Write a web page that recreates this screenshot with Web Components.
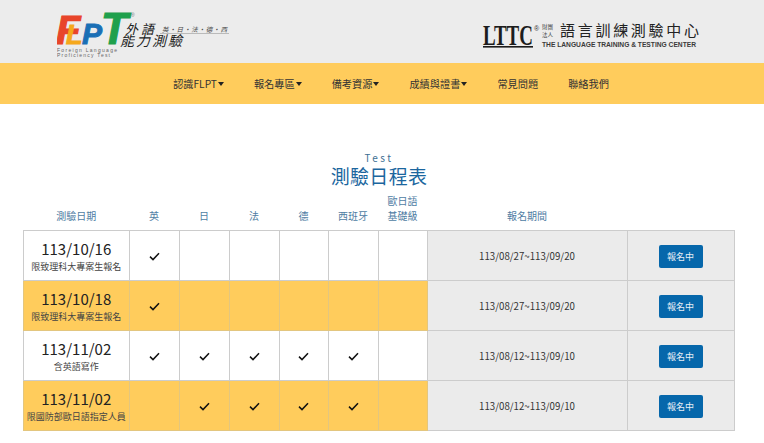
<!DOCTYPE html>
<html lang="zh-Hant">
<head>
<meta charset="utf-8">
<title>測驗日程表</title>
<style>
  html, body { margin: 0; padding: 0; background: #fff; }
  body { font-family: "Noto Sans CJK TC", "Noto Sans", sans-serif; overflow: hidden; }
</style>
</head>
<body>
<site-header></site-header>
<site-nav></site-nav>
<schedule-section heading="測驗日程表" eyebrow="Test"></schedule-section>

<script>
class SiteHeader extends HTMLElement {
  constructor() {
    super();
    this.attachShadow({ mode: "open" });
  }
  connectedCallback() {
    this.shadowRoot.innerHTML = `
      <style>
        :host { display: flex; justify-content: space-between; align-items: flex-start; height: 63px; background: #ececec; padding: 0 54px 0 57px; box-sizing: border-box; }
        svg { display: block; }
        .cjk { font-family: "Noto Sans CJK TC", sans-serif; }
        .lat { font-family: "Liberation Sans", sans-serif; }
      </style>
      <svg width="175" height="63" viewBox="0 0 175 63">
        <g class="lat" font-weight="700" font-style="italic">
          <text x="-1" y="44" fill="#e8452a" stroke="#e8452a" stroke-width="1.2" font-size="40">F</text>
          <text x="9" y="44" fill="#f5a81c" stroke="#f5a81c" stroke-width="1" font-size="27">L</text>
          <text x="25" y="44" fill="#1a6fb5" stroke="#1a6fb5" stroke-width="1" font-size="30">P</text>
          <text x="44" y="44" fill="#1fa04c" stroke="#1fa04c" stroke-width="1.2" font-size="44">T</text>
        </g>
        <text class="lat" x="74" y="17" font-size="5" fill="#777">®</text>
        <text class="cjk" x="68" y="34" font-size="13" font-style="italic" fill="#222" letter-spacing="3">外語</text>
        <text class="cjk" x="105" y="32" font-size="6.5" font-style="italic" fill="#444" letter-spacing=".8">英‧日‧法‧德‧西</text>
        <line x1="103" y1="33.5" x2="172" y2="33.5" stroke="#999" stroke-width=".6"/>
        <text class="cjk" x="63" y="46" font-size="14" font-style="italic" fill="#222" letter-spacing="2">能力測驗</text>
        <text class="lat" x="0" y="52" font-size="5" fill="#666" textLength="60" lengthAdjust="spacing">Foreign Language</text>
        <text class="lat" x="0" y="57" font-size="5" fill="#666" textLength="53" lengthAdjust="spacing">Proficiency Test</text>
      </svg>
      <svg width="228" height="63" viewBox="0 0 228 63">
        <text x="1" y="45" font-family="Liberation Serif" font-size="30" font-weight="700" fill="#1c1c1c" textLength="50" lengthAdjust="spacingAndGlyphs">LTTC</text>
        <rect x="1" y="46" width="50" height="1.6" fill="#1c1c1c"/>
        <text class="lat" x="52" y="31" font-size="7" fill="#333">®</text>
        <text x="60" y="29" class="cjk" font-size="5.5" fill="#444">財團</text>
        <text x="60" y="37" class="cjk" font-size="5.5" fill="#444">法人</text>
        <text x="78" y="36" class="cjk" font-size="15" fill="#222" textLength="139" lengthAdjust="spacing">語言訓練測驗中心</text>
        <text x="60" y="46.5" class="lat" font-size="6.7" font-weight="700" fill="#3a3a3a" textLength="154" lengthAdjust="spacing">THE LANGUAGE TRAINING &amp; TESTING CENTER</text>
      </svg>`;
  }
}

class SiteNav extends HTMLElement {
  constructor() {
    super();
    this.attachShadow({ mode: "open" });
    this.items = [
      { label: "認識FLPT", menu: true },
      { label: "報名專區", menu: true },
      { label: "備考資源", menu: true },
      { label: "成績與證書", menu: true },
      { label: "常見問題" },
      { label: "聯絡我們" },
    ];
  }
  connectedCallback() {
    this.shadowRoot.innerHTML = `
      <style>
        :host { display: flex; justify-content: center; gap: 30px; height: 41px; align-items: center; background: #ffcc5c; font-size: 10.2px; color: #333; padding-left: 18px; box-sizing: border-box; }
        span { display: inline-flex; align-items: center; }
        span.menu::after { content: ""; margin-left: 1px; border: 3.5px solid transparent; border-top: 4px solid #222; border-bottom: 0; }
      </style>
      ${this.items.map((item) => `<span class="${item.menu ? "menu" : ""}">${item.label}</span>`).join("")}`;
  }
}

class ScheduleSection extends HTMLElement {
  constructor() {
    super();
    this.attachShadow({ mode: "open" });
    this.rows = [
      { date: "113/10/16", note: "限致理科大專案生報名", marks: [1, 0, 0, 0, 0, 0], period: "113/08/27~113/09/20" },
      { date: "113/10/18", note: "限致理科大專案生報名", marks: [1, 0, 0, 0, 0, 0], period: "113/08/27~113/09/20", alt: true },
      { date: "113/11/02", note: "含英語寫作", marks: [1, 1, 1, 1, 1, 0], period: "113/08/12~113/09/10" },
      { date: "113/11/02", note: "限國防部歐日語指定人員", marks: [0, 1, 1, 1, 1, 0], period: "113/08/12~113/09/10", alt: true },
    ];
  }
  check() {
    return `<svg width="11" height="9" viewBox="0 0 11 9"><path d="M1 4.6 4 7.6 10 1.2" fill="none" stroke="#111" stroke-width="1.5"/></svg>`;
  }
  connectedCallback() {
    this.shadowRoot.innerHTML = `
      <style>
        :host { display: block; padding: 48px 30px 0 23px; }
        header { text-align: center; margin-left: 1px; }
        .eyebrow { font-size: 10px; line-height: 12px; letter-spacing: 2.5px; color: #3d6f94; }
        h1 { margin: 0; font-size: 19px; line-height: 24px; font-weight: 400; letter-spacing: .3px; color: #1b669e; }
        table { border-collapse: collapse; table-layout: fixed; width: 710.5px; margin-top: 5px; }
        th { font-size: 10px; line-height: 15px; font-weight: 400; color: #4f7da3; vertical-align: bottom; padding: 0 0 7px; }
        td { height: 50px; padding: 0; border: 1px solid #cccccc; text-align: center; font-size: 9.7px; box-sizing: border-box; }
        tr.alt td.plain { background: #ffcc5c; border-color: #e3c67f; }
        td svg { display: block; margin: 1px auto 0; }
        .date { font-size: 15px; line-height: 20px; color: #222; }
        .note { font-size: 9px; line-height: 13px; margin-top: 1px; color: #444; }
        td.period, td.action { background: #ebebeb; color: #333; }
        button { font: inherit; font-size: 9px; width: 44px; height: 23px; margin-top: 1px; border: 0; border-radius: 2px; padding: 0; background: #0667ab; color: #e6eef5; }
      </style>
      <header>
        <div class="eyebrow">${this.getAttribute("eyebrow")}</div>
        <h1>${this.getAttribute("heading")}</h1>
      </header>
      <table>
        <colgroup>
          <col style="width:105.5px"><col style="width:50px"><col style="width:50px"><col style="width:50px"><col style="width:49px"><col style="width:50px"><col style="width:49px"><col style="width:200px"><col style="width:107px">
        </colgroup>
        <thead>
          <tr><th>測驗日期</th><th>英</th><th>日</th><th>法</th><th>德</th><th>西班牙</th><th>歐日語<br>基礎級</th><th>報名期間</th><th></th></tr>
        </thead>
        <tbody>
          ${this.rows.map((row) => `
            <tr class="${row.alt ? "alt" : ""}">
              <td class="plain"><div class="date">${row.date}</div><div class="note">${row.note}</div></td>
              ${row.marks.map((m) => `<td class="plain">${m ? this.check() : ""}</td>`).join("")}
              <td class="period">${row.period}</td>
              <td class="action"><button>報名中</button></td>
            </tr>`).join("")}
        </tbody>
      </table>`;
  }
}

customElements.define("site-header", SiteHeader);
customElements.define("site-nav", SiteNav);
customElements.define("schedule-section", ScheduleSection);
</script>
</body>
</html>
